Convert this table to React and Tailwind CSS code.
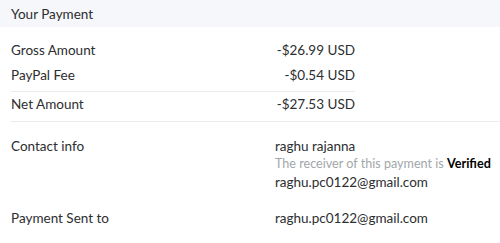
export default function App() {
  return (
    <div className="w-[500px] h-[243px] bg-white text-[13.5px] leading-[18px] text-[#2c2e2f]" style={{ fontFamily: 'Lato, "Open Sans", sans-serif' }}>
      <div className="h-[27px] bg-[#f5f7fa] px-[11px] flex items-center">Your Payment</div>

      <div className="ml-[11px] w-[344px] pt-[14px]">
        <div className="flex justify-between">
          <span>Gross Amount</span>
          <span>-$26.99 USD</span>
        </div>
        <div className="flex justify-between mt-[7px] pb-[7px] border-b border-[#eaeced]">
          <span>PayPal Fee</span>
          <span>-$0.54 USD</span>
        </div>
        <div className="flex justify-between pt-[3px]">
          <span>Net Amount</span>
          <span>-$27.53 USD</span>
        </div>
      </div>

      <div className="ml-[11px] mt-[8px] border-t border-[#eaeced] pt-[15px]">
        <div className="flex">
          <span className="w-[264px] shrink-0">Contact info</span>
          <div className="whitespace-nowrap">
            <div>raghu rajanna</div>
            <div className="text-[12.6px] text-[#a2a7aa]">
              The receiver of this payment is <span className="font-bold text-[#000]">Verified</span>
            </div>
            <div>raghu.pc0122@gmail.com</div>
          </div>
        </div>
        <div className="flex mt-[18px]">
          <span className="w-[264px] shrink-0">Payment Sent to</span>
          <span>raghu.pc0122@gmail.com</span>
        </div>
      </div>
    </div>
  );
}
